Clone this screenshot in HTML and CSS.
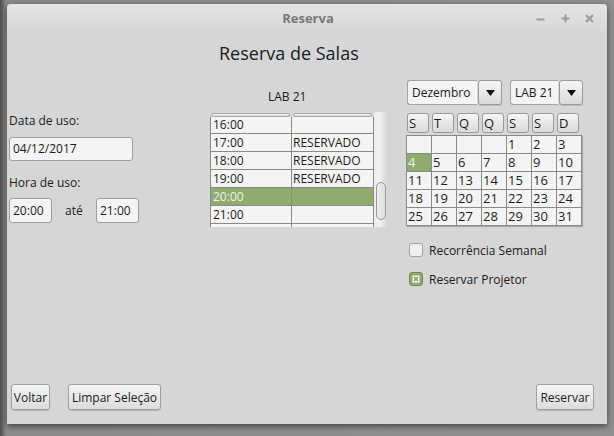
FILE: index.html
```html
<!DOCTYPE html>
<html lang="pt">
<head>
<meta charset="utf-8">
<title>Reserva</title>
<link rel="stylesheet" href="styles.css">
</head>
<body>
<div class="window">
  <div class="titlebar">
    <span></span>
    <span class="title">Reserva</span>
    <div class="controls">
      <svg width="11" height="11" viewBox="0 0 11 11"><line x1="1.5" y1="6.5" x2="9.5" y2="6.5" stroke="#9c9c9c" stroke-width="2"/></svg>
      <svg width="11" height="11" viewBox="0 0 11 11"><line x1="1.5" y1="5.5" x2="9.5" y2="5.5" stroke="#9c9c9c" stroke-width="2"/><line x1="5.5" y1="1.5" x2="5.5" y2="9.5" stroke="#9c9c9c" stroke-width="2"/></svg>
      <svg width="11" height="11" viewBox="0 0 11 11"><line x1="2" y1="2" x2="9" y2="9" stroke="#9c9c9c" stroke-width="2.2"/><line x1="9" y1="2" x2="2" y2="9" stroke="#9c9c9c" stroke-width="2.2"/></svg>
    </div>
  </div>
  <div class="content">
    <h1 class="heading">Reserva de Salas</h1>
    <div class="main">
      <div class="col-form">
        <div class="lbl">Data de uso:</div>
        <div class="field date">04/12/2017</div>
        <div class="lbl lbl-hora">Hora de uso:</div>
        <div class="time-row">
          <div class="field time">20:00</div>
          <span class="ate">até</span>
          <div class="field time">21:00</div>
        </div>
      </div>
      <div class="col-table">
        <div class="table-title">LAB 21</div>
        <div class="table-wrap">
          <div class="table">
            <div class="thead"><span class="hbar"></span><span class="hbar"></span></div>
            <div class="tbody">
              <div class="rows">
                <div class="row"><span class="c1">16:00</span><span class="c2"></span></div>
                <div class="row"><span class="c1">17:00</span><span class="c2">RESERVADO</span></div>
                <div class="row"><span class="c1">18:00</span><span class="c2">RESERVADO</span></div>
                <div class="row"><span class="c1">19:00</span><span class="c2">RESERVADO</span></div>
                <div class="row sel"><span class="c1">20:00</span><span class="c2"></span></div>
                <div class="row"><span class="c1">21:00</span><span class="c2"></span></div>
                <div class="row"><span class="c1"></span><span class="c2"></span></div>
              </div>
            </div>
          </div>
          <div class="scrollbar"><div class="thumb"></div></div>
        </div>
      </div>
      <div class="col-cal">
        <div class="combos">
          <div class="combo"><span class="combo-text w-mes">Dezembro</span><span class="combo-btn"><svg width="9" height="6" viewBox="0 0 9 6"><path d="M0 0H9L4.5 6Z" fill="#111"/></svg></span></div>
          <div class="combo"><span class="combo-text w-lab">LAB 21</span><span class="combo-btn"><svg width="9" height="6" viewBox="0 0 9 6"><path d="M0 0H9L4.5 6Z" fill="#111"/></svg></span></div>
        </div>
        <div class="dayheads">
          <span class="dh">S</span><span class="dh">T</span><span class="dh">Q</span><span class="dh">Q</span><span class="dh">S</span><span class="dh">S</span><span class="dh">D</span>
        </div>
        <div class="cal-grid">
          <span></span><span></span><span></span><span></span><span>1</span><span>2</span><span>3</span>
          <span class="today">4</span><span>5</span><span>6</span><span>7</span><span>8</span><span>9</span><span>10</span>
          <span>11</span><span>12</span><span>13</span><span>14</span><span>15</span><span>16</span><span>17</span>
          <span>18</span><span>19</span><span>20</span><span>21</span><span>22</span><span>23</span><span>24</span>
          <span>25</span><span>26</span><span>27</span><span>28</span><span>29</span><span>30</span><span>31</span>
        </div>
        <div class="check check-first"><span class="box"></span><span>Recorrência Semanal</span></div>
        <div class="check check-second">
          <svg class="box-on" width="14" height="14" viewBox="0 0 14 14"><rect x="0.5" y="0.5" width="13" height="13" rx="2.5" fill="#8fab6d" stroke="#6f8a55"/><rect x="3.5" y="3.5" width="7" height="7" fill="#f4f4f4"/><path d="M5 5L9 9M9 5L5 9" stroke="#7c9a5e" stroke-width="1.4"/></svg>
          <span>Reservar Projetor</span>
        </div>
      </div>
    </div>
    <div class="actions">
      <button class="btn b-voltar">Voltar</button>
      <button class="btn b-limpar">Limpar Seleção</button>
      <span class="spacer"></span>
      <button class="btn b-reservar">Reservar</button>
    </div>
  </div>
</div>
</body>
</html>
```

FILE: styles.css
```css
* { box-sizing: border-box; }

html, body {
  margin: 0;
  height: 100%;
}

body {
  padding: 4px 0 0 7px;
  background: linear-gradient(to right, #4c4c4c 0, #8a8a8a 6px, #909090 100%);
  font-family: "Open Sans", "DejaVu Sans", sans-serif;
  font-size: 12px;
  color: #1c1c1c;
  overflow: hidden;
}

.window {
  width: 600px;
  height: 420px;
  background: #d6d6d6;
  border-radius: 4px 4px 0 0;
  box-shadow: 0 2px 6px rgba(0, 0, 0, 0.55);
  display: flex;
  flex-direction: column;
}

.titlebar {
  height: 27px;
  display: grid;
  grid-template-columns: 1fr auto 1fr;
  align-items: center;
  background: linear-gradient(#e3e3e3, #d8d8d8);
  border-radius: 4px 4px 0 0;
}

.title {
  font-weight: bold;
  font-size: 13px;
  color: #787878;
  padding-left: 2px;
}

.controls {
  justify-self: end;
  display: flex;
  gap: 13.5px;
  padding-right: 12px;
  padding-top: 1px;
}

.controls svg { display: block; }

.content {
  flex: 1;
  display: flex;
  flex-direction: column;
}

.heading {
  margin: 0;
  height: 45px;
  line-height: 45px;
  padding-left: 212px;
  font-size: 18px;
  font-weight: normal;
  color: #1c1c1c;
}

.main {
  flex: 1;
  display: flex;
}

/* left form */
.col-form {
  width: 203px;
  padding: 37px 0 0 2px;
}

.lbl {
  line-height: 16px;
  height: 16px;
}

.field {
  height: 24px;
  background: #f4f4f4;
  border: 1px solid #9e9e9e;
  border-radius: 3px;
  line-height: 22px;
  padding-left: 3px;
}

.date {
  width: 124px;
  margin-top: 8px;
}

.lbl-hora { margin-top: 14px; }

.time-row {
  display: flex;
  align-items: center;
  margin-top: 7px;
}

.time {
  width: 43px;
  height: 25px;
  line-height: 23px;
}

.ate {
  margin: 0 13px 0 13px;
  width: 18px;
}

/* table */
.col-table {
  width: 178px;
  padding-top: 13px;
}

.table-title {
  line-height: 16px;
  padding-left: 58px;
}

.table-wrap {
  display: flex;
  margin-top: 7px;
  height: 115px;
}

.table {
  width: 164px;
  display: flex;
  flex-direction: column;
}

.thead {
  height: 5px;
  display: flex;
  gap: 3px;
  padding: 1px 2px 0 1px;
}

.hbar {
  width: 79px;
  height: 4px;
  border: 1px solid #ababab;
  border-radius: 3px;
  background: linear-gradient(#fafafa, #cfcfcf);
}

.tbody {
  flex: 1;
  overflow: hidden;
  background: #f4f4f4;
  border-left: 1px solid #8a8a8a;
  border-right: 1px solid #8a8a8a;
}

.rows { margin-top: -1px; }

.row {
  display: flex;
  height: 18px;
  border-bottom: 1px solid #8a8a8a;
  line-height: 17px;
}

.c1 {
  width: 81px;
  border-right: 1px solid #8a8a8a;
  padding-left: 2px;
}

.c2 {
  flex: 1;
  padding-left: 1px;
}

.row.sel {
  background: #8fab6d;
  color: #eef2ea;
}

.scrollbar {
  width: 14px;
  height: 115px;
  background: linear-gradient(to right, #ececec, #f2f2f2 40%, #d4d4d4);
  padding: 70px 0 0 2px;
}

.thumb {
  width: 10px;
  height: 38px;
  border: 1px solid #999;
  border-radius: 5px;
  background: linear-gradient(to right, #ededed, #dedede);
}

/* calendar */
.col-cal {
  margin-left: 18px;
  width: 178px;
  padding-top: 4px;
}

.combos {
  display: flex;
  padding-left: 1px;
  gap: 8px;
}

.combo {
  display: flex;
  height: 25px;
  gap: 1px;
}

.combo-text {
  background: #f4f4f4;
  border: 1px solid #a4a4a4;
  border-right: none;
  border-radius: 3px 0 0 3px;
  line-height: 23px;
  padding-left: 4px;
}

.w-mes { width: 70px; }
.w-lab { width: 48px; }

.combo-btn {
  width: 24px;
  height: 25px;
  border: 1px solid #9a9a9a;
  border-radius: 3px;
  background: linear-gradient(#f6f6f6, #dadada);
  display: flex;
  align-items: center;
  justify-content: center;
  box-shadow: 0 1px 0 rgba(0,0,0,0.12);
}

.combo-btn svg { display: block; }

.dayheads {
  display: flex;
  gap: 3px;
  padding-left: 1px;
  margin-top: 8px;
}

.dh {
  width: 22px;
  height: 20px;
  border: 1px solid #9a9a9a;
  border-radius: 3px;
  background: linear-gradient(#f6f6f6, #dadada);
  font-size: 13px;
  line-height: 18px;
  padding-left: 1px;
}

.cal-grid {
  margin-top: 2px;
  width: 176px;
  display: grid;
  grid-template-columns: repeat(7, 24px);
  grid-auto-rows: 17px;
  gap: 1px;
  padding: 1px;
  background: #8a8a8a;
  box-shadow: 1px 1px 1px rgba(0, 0, 0, 0.2);
}

.cal-grid span {
  background: #f4f4f4;
  font-size: 13px;
  line-height: 17px;
  padding-left: 1px;
}

.cal-grid .today {
  background: #8fab6d;
  color: #eef2ea;
}

.check {
  display: flex;
  align-items: center;
  height: 14px;
  gap: 6px;
  padding-left: 3px;
}

.check-first { margin-top: 17px; }
.check-second { margin-top: 15px; }

.box {
  width: 14px;
  height: 14px;
  border: 1px solid #a2a2a2;
  border-radius: 3px;
  background: #f0f0f0;
}

.box-on { display: block; }

/* bottom */
.actions {
  display: flex;
  align-items: center;
  padding: 0 13px 14px 4px;
  gap: 18px;
}

.spacer { flex: 1; }

.btn {
  height: 26px;
  font-family: "Open Sans", "DejaVu Sans", sans-serif;
  font-size: 12px;
  color: #1c1c1c;
  border: 1px solid #a0a0a0;
  border-radius: 3px;
  background: linear-gradient(#f6f6f6, #dcdcdc);
  box-shadow: 0 1px 1px rgba(0, 0, 0, 0.15);
  padding: 0;
  margin: 0;
}

.b-voltar { width: 39px; }
.b-limpar { width: 93px; }
.b-reservar { width: 58px; }
```
